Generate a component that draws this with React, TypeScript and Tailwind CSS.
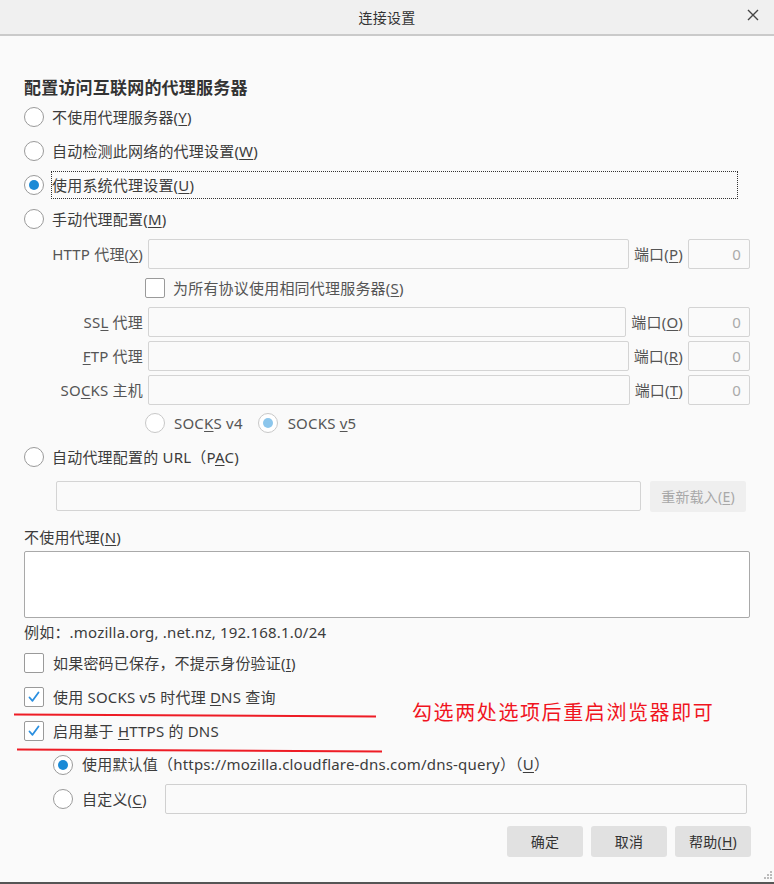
import type { ReactNode } from "react"

const font = { fontFamily: '"Noto Sans", "Noto Sans CJK SC", sans-serif' }

function Radio({ checked = false, dim = false }: { checked?: boolean; dim?: boolean }) {
    return (
        <span
            className={`w-[20px] h-[20px] shrink-0 rounded-full border bg-white flex items-center justify-center ${dim ? "border-[#c8c8c8]" : "border-[#9a9a9a]"}`}
        >
            {checked && <span className={`w-[10px] h-[10px] rounded-full ${dim ? "bg-[#8cc6ec]" : "bg-[#1a8ad6]"}`}></span>}
        </span>
    )
}

function Check({ checked = false }: { checked?: boolean }) {
    return (
        <span className="w-[20px] h-[20px] shrink-0 rounded-[2px] border border-[#9a9a9a] bg-white flex items-center justify-center">
            {checked && (
                <svg width="14" height="14" viewBox="0 0 14 14" fill="none">
                    <path d="M2.5 7.5 L5.5 10.8 L11.5 2.5" stroke="#2a8fe0" strokeWidth="1.8" strokeLinecap="round" strokeLinejoin="round" />
                </svg>
            )}
        </span>
    )
}

function Field({ className = "" }: { className?: string }) {
    return <div className={`h-[30px] border border-[#d4d4d4] rounded-[2px] bg-[#fafafa] ${className}`}></div>
}

function ProxyRow({ label, port }: { label: ReactNode; port: ReactNode }) {
    return (
        <div className="h-[34px] flex items-center">
            <div className="w-[119px] text-right text-[#555]">{label}</div>
            <Field className="flex-1 ml-[5px]" />
            <div className="ml-[5px] text-[#555]">{port}</div>
            <div className="ml-[5px] w-[62px] h-[30px] border border-[#d4d4d4] rounded-[2px] flex items-center justify-end pr-[8px] text-[#aaa]">
                0
            </div>
        </div>
    )
}

export default function App() {
    return (
        <div className="h-[884px] w-[774px] flex flex-col bg-[#fafafa] text-[15px] tracking-[0.2px] text-[#3c3c3c] relative overflow-hidden" style={font}>
            {/* title bar */}
            <div className="h-[36px] shrink-0 bg-[#f0f0f0] border-b-2 border-[#cacaca] flex items-center justify-center relative">
                <span className="text-[14px] text-[#333]">连接设置</span>
                <span className="absolute right-[14px] top-[8px] text-[#444]">
                    <svg width="14" height="14" viewBox="0 0 14 14">
                        <path d="M2 2 L12 12 M12 2 L2 12" stroke="#444" strokeWidth="1.4" />
                    </svg>
                </span>
            </div>

            <div className="flex-1 flex flex-col pl-[24px] pr-[24px] pt-[40px]">
                <div className="h-[24px] flex items-center text-[17px] font-bold text-[#333]">配置访问互联网的代理服务器</div>

                <div className="h-[34px] flex items-center gap-[8px]">
                    <Radio />
                    <span>不使用代理服务器(<u className="underline-offset-2">Y</u>)</span>
                </div>
                <div className="h-[34px] flex items-center gap-[8px]">
                    <Radio />
                    <span>自动检测此网络的代理设置(<u className="underline-offset-2">W</u>)</span>
                </div>
                <div className="h-[34px] flex items-center gap-[7px]">
                    <Radio checked />
                    <span className="flex-1 mr-[12px] h-[28px] border border-dotted border-[#333] flex items-center">
                        使用系统代理设置(<u className="underline-offset-2">U</u>)
                    </span>
                </div>
                <div className="h-[34px] flex items-center gap-[8px]">
                    <Radio />
                    <span>手动代理配置(<u className="underline-offset-2">M</u>)</span>
                </div>

                <div className="mt-[1px]">
                    <ProxyRow
                        label={<>HTTP 代理(<u className="underline-offset-2">X</u>)</>}
                        port={<>端口(<u className="underline-offset-2">P</u>)</>}
                    />
                </div>
                <div className="h-[34px] flex items-center gap-[8px] pl-[121px] text-[#555]">
                    <Check />
                    <span>为所有协议使用相同代理服务器(<u className="underline-offset-2">S</u>)</span>
                </div>
                <ProxyRow
                    label={<>SS<u className="underline-offset-2">L</u> 代理</>}
                    port={<>端口(<u className="underline-offset-2">O</u>)</>}
                />
                <ProxyRow
                    label={<><u className="underline-offset-2">F</u>TP 代理</>}
                    port={<>端口(<u className="underline-offset-2">R</u>)</>}
                />
                <ProxyRow
                    label={<>SO<u className="underline-offset-2">C</u>KS 主机</>}
                    port={<>端口(<u className="underline-offset-2">T</u>)</>}
                />

                <div className="h-[32px] flex items-center pl-[121px] text-[#555]">
                    <Radio dim />
                    <span className="ml-[9px]">SOC<u className="underline-offset-2">K</u>S v4</span>
                    <span className="ml-[15px]"><Radio checked dim /></span>
                    <span className="ml-[10px]">SOCKS <u className="underline-offset-2">v</u>5</span>
                </div>

                <div className="h-[36px] flex items-center gap-[8px]">
                    <Radio />
                    <span>自动代理配置的 URL（P<u className="underline-offset-2">A</u>C)</span>
                </div>
                <div className="h-[42px] flex items-center pl-[32px] pr-[4px] gap-[9px]">
                    <Field className="flex-1" />
                    <div className="w-[96px] h-[31px] rounded-[2px] bg-[#efefef] flex items-center justify-center text-[14px] text-[#a8a8a8]">
                        重新载入(<u className="underline-offset-2">E</u>)
                    </div>
                </div>

                <div className="h-[20px] mt-[10px] flex items-center">
                    不使用代理(<u className="underline-offset-2">N</u>)
                </div>
                <div className="mt-[4px] h-[67px] border border-[#a9a9a9] rounded-[2px] bg-white"></div>
                <div className="h-[20px] mt-[4px] flex items-center">例如：.mozilla.org, .net.nz, 192.168.1.0/24</div>

                <div className="h-[34px] mt-[4px] flex items-center gap-[9px]">
                    <Check />
                    <span>如果密码已保存，不提示身份验证(<u className="underline-offset-2">I</u>)</span>
                </div>
                <div className="h-[34px] flex items-center gap-[9px]">
                    <Check checked />
                    <span>使用 SOCKS v5 时代理 <u className="underline-offset-2">D</u>NS 查询</span>
                </div>
                <div className="h-[34px] flex items-center gap-[9px]">
                    <Check checked />
                    <span>启用基于 <u className="underline-offset-2">H</u>TTPS 的 DNS</span>
                </div>
                <div className="h-[33px] flex items-center gap-[9px] pl-[29px]">
                    <Radio checked />
                    <span>使用默认值（https://mozilla.cloudflare-dns.com/dns-query）（<u className="underline-offset-2">U</u>）</span>
                </div>
                <div className="h-[36px] flex items-center pl-[29px] pr-[3px]">
                    <Radio />
                    <span className="ml-[9px]">自定义(<u className="underline-offset-2">C</u>)</span>
                    <div className="flex-1 ml-[18px] h-[30px] border border-[#d0d0d0] rounded-[2px] bg-[#fafafa]"></div>
                </div>

                <div className="mt-[9px] flex justify-end gap-[8px] mr-[-1px]">
                    <button className="w-[76px] h-[31px] rounded-[3px] bg-[#e1e1e1] text-[14px] text-[#333]">确定</button>
                    <button className="w-[76px] h-[31px] rounded-[3px] bg-[#e1e1e1] text-[14px] text-[#333]">取消</button>
                    <button className="w-[76px] h-[31px] rounded-[3px] bg-[#e1e1e1] text-[14px] text-[#333]">
                        帮助(<u className="underline-offset-2">H</u>)
                    </button>
                </div>
            </div>

            {/* resize grip */}
            <svg className="absolute right-[1px] bottom-[4px]" width="10" height="10" viewBox="0 0 10 10">
                <rect x="7" y="1" width="2" height="2" fill="#bbb" />
                <rect x="4" y="4" width="2" height="2" fill="#bbb" />
                <rect x="7" y="4" width="2" height="2" fill="#bbb" />
                <rect x="1" y="7" width="2" height="2" fill="#bbb" />
                <rect x="4" y="7" width="2" height="2" fill="#bbb" />
                <rect x="7" y="7" width="2" height="2" fill="#bbb" />
            </svg>
            <div className="h-[2px] shrink-0 bg-[#555]"></div>

            {/* red annotation */}
            <svg className="absolute left-0 top-0 pointer-events-none" width="774" height="884">
                <path d="M14 714.5 L376 716.5" stroke="#ee1c25" strokeWidth="2" />
                <path d="M17 749.5 L382 751.5" stroke="#ee1c25" strokeWidth="2" />
            </svg>
            <div className="absolute left-[412px] top-[700px] text-[20px] leading-[24px] tracking-[1.6px] text-[#f0141e]" style={{ fontFamily: '"Noto Sans CJK SC", serif' }}>
                勾选两处选项后重启浏览器即可
            </div>
        </div>
    )
}
